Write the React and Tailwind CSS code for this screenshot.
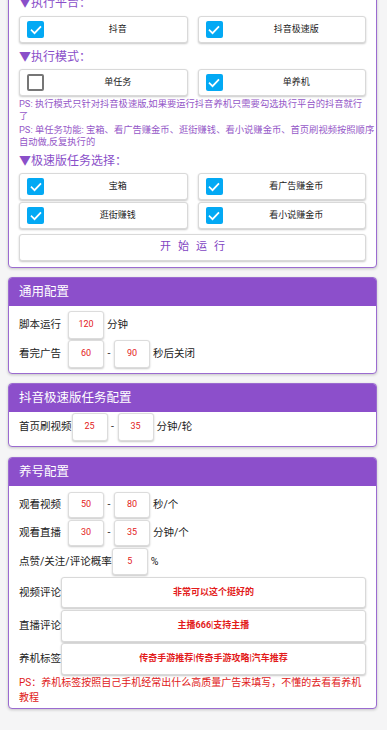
import React from 'react';

const font = { fontFamily: 'Roboto, "Noto Sans CJK SC", sans-serif' };

const CheckIcon = () => (
  <svg viewBox="0 0 24 24" className="w-[14px] h-[14px]" fill="none" stroke="white" strokeWidth="3" strokeLinecap="square">
    <path d="M4.5 12.5l5 5L19.5 7" />
  </svg>
);

const Check = ({ checked, label }) => (
  <div className="flex items-center h-[27px] bg-white border border-[#d9d9d9] rounded-[3px] shadow-[0_1px_2px_rgba(0,0,0,0.22)]">
    {checked ? (
      <div className="ml-[7px] w-[17px] h-[17px] rounded-[2px] bg-[#03a9f4] flex items-center justify-center shrink-0">
        <CheckIcon />
      </div>
    ) : (
      <div className="ml-[7px] w-[17px] h-[17px] rounded-[2px] border-2 border-[#767676] shrink-0"></div>
    )}
    <span className="flex-1 text-center pl-[5px] text-[9px] text-[#222]">{label}</span>
  </div>
);

const Heading = ({ children, className = '' }) => (
  <div className={`flex items-center text-[12px] text-[#8a4fc9] ${className}`}>{children}</div>
);

const Num = ({ value }) => (
  <div className="w-[36px] h-full bg-white border border-[#dcdcdc] rounded-[3px] shadow-[0_1px_2px_rgba(0,0,0,0.22)] flex items-center justify-center text-[9px] text-[#e31b1b] shrink-0">
    {value}
  </div>
);

const Dash = () => <span className="w-[10px] text-center text-[10.5px] text-[#333]">-</span>;

const Row = ({ label, children, className = 'h-[28px]' }) => (
  <div className={`flex items-center ${className}`}>
    <span className="min-w-[49px] text-[10.5px] text-[#222] whitespace-nowrap">{label}</span>
    {children}
  </div>
);

const Unit = ({ children }) => <span className="ml-[3px] text-[10.5px] text-[#222]">{children}</span>;

const TextRow = ({ label, value, className }) => (
  <div className={`flex items-center ${className}`}>
    <span className="text-[10.5px] text-[#222] whitespace-nowrap">{label}</span>
    <div className="flex-1 h-full bg-white border border-[#d9d9d9] rounded-[3px] shadow-[0_1px_2px_rgba(0,0,0,0.22)] flex items-center justify-center text-[9px] font-bold text-[#e31b1b]">
      {value}
    </div>
  </div>
);

const Card = ({ title, children, className = '' }) => (
  <div className={`ml-2 mr-[10px] bg-white border border-[#9b6bd0] rounded-[4px] overflow-hidden shadow-[0_1px_3px_rgba(0,0,0,0.2)] ${className}`}>
    {title && (
      <div className="bg-[#8c4fcb] h-[28px] flex items-center px-[10px] text-[12.5px] text-white">{title}</div>
    )}
    {children}
  </div>
);

export default function App() {
  return (
    <div className="w-[387px] h-[730px] overflow-hidden bg-[#f5f5f6]" style={font}>
      <div className="-mt-[11px]">
        <Card>
          <div className="px-[10px] pb-[6px]">
            <Heading className="h-[26px]">▼执行平台：</Heading>
            <div className="grid grid-cols-2 gap-x-[10px]">
              <Check checked label="抖音" />
              <Check checked label="抖音极速版" />
            </div>
            <Heading className="h-[26px] pt-[2px]">▼执行模式：</Heading>
            <div className="grid grid-cols-2 gap-x-[10px]">
              <Check checked={false} label="单任务" />
              <Check checked label="单养机" />
            </div>
            <div className="mt-[2px] -mr-[8px] text-[9.3px] leading-[12px] text-[#9558c8]">
              <div className="whitespace-nowrap">PS: 执行模式只针对抖音极速版,如果要运行抖音养机只需要勾选执行平台的抖音就行</div>
              <div>了</div>
            </div>
            <div className="mt-[2px] -mr-[8px] text-[9.3px] leading-[12px] text-[#9558c8]">
              <div className="whitespace-nowrap">PS: 单任务功能: 宝箱、看广告赚金币、逛街赚钱、看小说赚金币、首页刷视频按照顺序</div>
              <div>自动做,反复执行的</div>
            </div>
            <Heading className="h-[25px]">▼极速版任务选择：</Heading>
            <div className="grid grid-cols-2 gap-x-[10px] gap-y-[2px]">
              <Check checked label="宝箱" />
              <Check checked label="看广告赚金币" />
              <Check checked label="逛街赚钱" />
              <Check checked label="看小说赚金币" />
            </div>
            <button className="mt-[5px] w-full h-[27px] bg-white border border-[#d9d9d9] rounded-[3px] shadow-[0_1px_2px_rgba(0,0,0,0.22)] text-[11px] text-[#7f45c2] tracking-[7px] pl-[7px]">
              开始运行
            </button>
          </div>
        </Card>

        <Card title="通用配置" className="mt-[9px]">
          <div className="px-[10px] pt-[5px] pb-[5px]">
            <Row label="脚本运行">
              <Num value="120" />
              <Unit>分钟</Unit>
            </Row>
            <Row label="看完广告" className="h-[28px] mt-[1px]">
              <Num value="60" />
              <Dash />
              <Num value="90" />
              <Unit>秒后关闭</Unit>
            </Row>
          </div>
        </Card>

        <Card title="抖音极速版任务配置" className="mt-[9px]">
          <div className="px-[10px] pt-[1px] pb-[5px]">
            <Row label="首页刷视频">
              <Num value="25" />
              <Dash />
              <Num value="35" />
              <Unit>分钟/轮</Unit>
            </Row>
          </div>
        </Card>

        <Card title="养号配置" className="mt-[10px]">
          <div className="px-[10px] pt-[6px] pb-[3px]">
            <Row label="观看视频" className="h-[26px]">
              <Num value="50" />
              <Dash />
              <Num value="80" />
              <Unit>秒/个</Unit>
            </Row>
            <Row label="观看直播" className="h-[26px] mt-[2px]">
              <Num value="30" />
              <Dash />
              <Num value="35" />
              <Unit>分钟/个</Unit>
            </Row>
            <Row label="点赞/关注/评论概率" className="h-[27px] mt-[2px]">
              <Num value="5" />
              <Unit>%</Unit>
            </Row>
            <TextRow label="视频评论" value="非常可以这个挺好的" className="h-[31px] mt-[2px]" />
            <TextRow label="直播评论" value="主播666|支持主播" className="h-[32px] mt-[2px]" />
            <TextRow label="养机标签" value="传奇手游推荐|传奇手游攻略|汽车推荐" className="h-[32px] mt-[1px]" />
            <div className="text-[10px] leading-[15px] text-[#e02020]">
              PS：养机标签按照自己手机经常出什么高质量广告来填写，不懂的去看看养机教程
            </div>
          </div>
        </Card>
      </div>
    </div>
  );
}
